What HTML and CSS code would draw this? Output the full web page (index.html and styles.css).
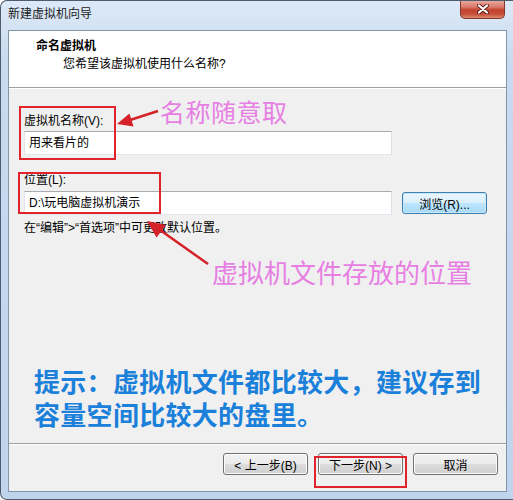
FILE: index.html
```html
<!DOCTYPE html>
<html lang="zh-CN">
<head>
    <meta charset="UTF-8">
    <title>新建虚拟机向导</title>
    <link rel="stylesheet" href="styles.css">
</head>
<body>
    <div class="window">
        <div class="titlebar">
            <span class="title">新建虚拟机向导</span>
            <div class="close-btn">
                <svg width="12" height="10" viewBox="0 0 12 10">
                    <path d="M2 1.5 L10 8.5 M10 1.5 L2 8.5" stroke="#5b1d16" stroke-width="4" stroke-linecap="round"/>
                    <path d="M2 1.5 L10 8.5 M10 1.5 L2 8.5" stroke="#fff" stroke-width="2.2" stroke-linecap="round"/>
                </svg>
            </div>
        </div>

        <div class="client">
            <div class="header">
                <div class="header-title">命名虚拟机</div>
                <div class="header-sub">您希望该虚拟机使用什么名称?</div>
            </div>

            <div class="content">
                <div class="field-label">虚拟机名称(V):</div>
                <div class="textbox">用来看片的</div>

                <div class="field-label second">位置(L):</div>
                <div class="location-row">
                    <div class="textbox">D:\玩电脑虚拟机演示</div>
                    <button class="btn btn-focus">浏览(R)...</button>
                </div>
                <div class="note">在“编辑”&gt;“首选项”中可更改默认位置。</div>

                <div class="tip">提示：虚拟机文件都比较大，建议存到<br>容量空间比较大的盘里。</div>
            </div>

            <div class="footer">
                <button class="btn">&lt; 上一步(B)</button>
                <button class="btn">下一步(N) &gt;</button>
                <button class="btn">取消</button>
            </div>
        </div>

        <!-- annotations drawn over the dialog -->
        <div class="mark mark-name"></div>
        <div class="mark mark-location"></div>
        <div class="mark mark-next"></div>
        <div class="callout callout-name">名称随意取</div>
        <div class="callout callout-location">虚拟机文件存放的位置</div>
        <svg class="arrows" width="513" height="500" viewBox="0 0 513 500">
            <line x1="158" y1="111" x2="130" y2="120" stroke="#d42228" stroke-width="2.5"/>
            <polygon points="117,124 133.5,126.5 129.5,113.5" fill="#d42228"/>
            <line x1="208" y1="264" x2="160" y2="230" stroke="#d42228" stroke-width="2.5"/>
            <polygon points="147,221 156.5,237.5 166,225" fill="#d42228"/>
        </svg>
    </div>
</body>
</html>
```

FILE: styles.css
```css
body {
    margin: 0;
    font-family: "Liberation Sans", "Noto Sans CJK SC", sans-serif;
    font-size: 12px;
    color: #000;
    background: #fff;
}

.window {
    position: relative;
    width: 513px;
    height: 500px;
    box-sizing: border-box;
    border: 1px solid #4e5c6e;
    border-right: none;
    border-radius: 7px 0 0 7px;
    background: linear-gradient(#dde9f7, #c8dbf0 60px, #bfd3ec);
    display: flex;
    flex-direction: column;
    overflow: hidden;
}

.titlebar {
    height: 29px;
    display: flex;
    align-items: flex-start;
}

.title {
    padding: 5px 0 0 7px;
    line-height: 16px;
    color: #1b1b1b;
}

.close-btn {
    margin: -1px 8px 0 auto;
    width: 45px;
    height: 19px;
    box-sizing: border-box;
    border: 1px solid #84372f;
    border-top: none;
    border-radius: 0 0 5px 5px;
    background: linear-gradient(#eab0a2, #d9776a 40%, #c2412f 55%, #c8533d 80%, #dc8a6e);
    display: flex;
    align-items: center;
    justify-content: center;
}

.client {
    flex: 1;
    margin: 0 6px 7px 7px;
    border: 1px solid #8195ad;
    background: #f0f0f0;
    display: flex;
    flex-direction: column;
}

.header {
    height: 56px;
    background: #fff;
    border-bottom: 1px solid #a0a0a0;
    box-shadow: 0 1px 0 #fff;
}

.header-title {
    font-weight: bold;
    line-height: 16px;
    padding: 7px 0 0 27px;
}

.header-sub {
    line-height: 16px;
    padding: 2px 0 0 54px;
}

.content {
    flex: 1;
    padding: 25px 15px 0 15px;
}

.field-label {
    line-height: 16px;
    margin-bottom: 2px;
}

.field-label.second {
    margin: 17px 0 3px 0;
}

.textbox {
    width: 368px;
    height: 24px;
    box-sizing: border-box;
    border: 1px solid;
    border-color: #abadb3 #dbdfe6 #e3e9ef #e2e3ea;
    background: #fff;
    padding-left: 4px;
    line-height: 22px;
}

.location-row {
    display: flex;
    align-items: center;
    gap: 10px;
}

.note {
    margin-top: 5px;
    line-height: 16px;
}

.tip {
    margin: 128px 0 0 10px;
    font-size: 26px;
    line-height: 33px;
    font-weight: bold;
    letter-spacing: 0.3px;
    color: #1b80da;
    font-family: "Noto Sans CJK SC", sans-serif;
}

.btn {
    width: 85px;
    height: 22px;
    padding: 0;
    border: 1px solid #707070;
    border-radius: 3px;
    background: linear-gradient(#f2f2f2, #ebebeb 50%, #dddddd 50%, #cfcfcf);
    box-shadow: inset 0 0 0 1px #fcfcfc;
    font-family: "Liberation Sans", "Noto Sans CJK SC", sans-serif;
    font-size: 12px;
    color: #000;
}

.btn-focus {
    border-color: #3c7fb1;
    background: linear-gradient(#eaf6fd, #d9f0fc 50%, #bee6fd 50%, #a7d9f5);
    box-shadow: inset 0 0 0 1px #c8e8f8;
}

.footer {
    height: 38px;
    border-top: 1px solid #a0a0a0;
    box-shadow: inset 0 1px 0 #fff;
    display: flex;
    justify-content: flex-end;
    align-items: flex-start;
    gap: 10px;
    padding: 9px 8px 0 0;
}

/* annotations */
.mark {
    position: absolute;
    border: 2px solid #e0242b;
    box-sizing: border-box;
}

.mark-name {
    left: 18px;
    top: 105px;
    width: 97px;
    height: 54px;
}

.mark-location {
    left: 17px;
    top: 171px;
    width: 143px;
    height: 42px;
}

.mark-next {
    left: 313px;
    top: 455px;
    width: 93px;
    height: 32px;
}

.callout {
    position: absolute;
    font-family: "Noto Sans CJK SC", sans-serif;
    color: #e77fe3;
    white-space: nowrap;
}

.callout-name {
    left: 159px;
    top: 97px;
    font-size: 25px;
    line-height: 26px;
    letter-spacing: 0.5px;
}

.callout-location {
    left: 211px;
    top: 257px;
    font-size: 26px;
    line-height: 27px;
}

.arrows {
    position: absolute;
    left: -1px;
    top: -1px;
}
```
